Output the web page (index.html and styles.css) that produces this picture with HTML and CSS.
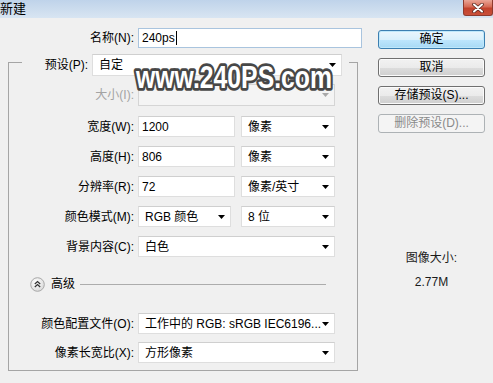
FILE: index.html
```html
<!DOCTYPE html>
<html lang="zh-CN">
<head>
    <meta charset="UTF-8">
    <title>新建</title>
    <link rel="stylesheet" href="styles.css">
</head>
<body>
<div class="titlebar">
    <span class="title">新建</span>
    <div class="close">
        <svg width="14" height="10" viewBox="0 0 14 10"><path d="M3 1.5 L11 8.5 M11 1.5 L3 8.5" stroke="#5a2a22" stroke-width="3.6" stroke-linecap="round"/><path d="M3 1.5 L11 8.5 M11 1.5 L3 8.5" stroke="#fff" stroke-width="2" stroke-linecap="round"/></svg>
    </div>
</div>
<div class="dialog">
    <div class="main">
        <div class="row name-row">
            <label class="lbl">名称(N):</label>
            <div class="field input name-input">240ps<span class="caret"></span></div>
        </div>
        <div class="group">
            <div class="preset">
                <label class="preset-lbl">预设(P):</label>
                <div class="field select preset-select">自定<svg class="arrow" width="7" height="4"><path d="M0 0h7L3.5 4z"/></svg></div>
            </div>
            <div class="row size-row">
                <label class="lbl disabled">大小(I):</label>
                <div class="field select wide off"><svg class="arrow" width="7" height="4"><path d="M0 0h7L3.5 4z"/></svg></div>
            </div>
            <div class="row first">
                <label class="lbl">宽度(W):</label>
                <div class="field input num">1200</div>
                <div class="field select unit">像素<svg class="arrow" width="7" height="4"><path d="M0 0h7L3.5 4z"/></svg></div>
            </div>
            <div class="row">
                <label class="lbl">高度(H):</label>
                <div class="field input num">806</div>
                <div class="field select unit">像素<svg class="arrow" width="7" height="4"><path d="M0 0h7L3.5 4z"/></svg></div>
            </div>
            <div class="row">
                <label class="lbl">分辨率(R):</label>
                <div class="field input num">72</div>
                <div class="field select unit">像素/英寸<svg class="arrow" width="7" height="4"><path d="M0 0h7L3.5 4z"/></svg></div>
            </div>
            <div class="row">
                <label class="lbl">颜色模式(M):</label>
                <div class="field select mode">RGB 颜色<svg class="arrow" width="7" height="4"><path d="M0 0h7L3.5 4z"/></svg></div>
                <div class="field select unit bits">8 位<svg class="arrow" width="7" height="4"><path d="M0 0h7L3.5 4z"/></svg></div>
            </div>
            <div class="row">
                <label class="lbl">背景内容(C):</label>
                <div class="field select wide">白色<svg class="arrow" width="7" height="4"><path d="M0 0h7L3.5 4z"/></svg></div>
            </div>
            <div class="advanced">
                <svg class="adv-icon" width="15" height="15" viewBox="0 0 15 15">
                    <defs>
                        <radialGradient id="knob" cx="0.4" cy="0.35" r="0.7">
                            <stop offset="0" stop-color="#ffffff"/>
                            <stop offset="1" stop-color="#d8d8d8"/>
                        </radialGradient>
                    </defs>
                    <circle cx="7.5" cy="7.5" r="6.8" fill="url(#knob)" stroke="#a8a8a8"/>
                    <path d="M4.8 7 L7.5 4.6 L10.2 7 M4.8 10 L7.5 7.6 L10.2 10" fill="none" stroke="#333" stroke-width="1.3"/>
                </svg>
                <span class="adv-text">高级</span>
                <span class="adv-line"></span>
            </div>
            <div class="row profile-row">
                <label class="lbl">颜色配置文件(O):</label>
                <div class="field select wide"><span class="clip">工作中的 RGB: sRGB IEC6196...</span><svg class="arrow" width="7" height="4"><path d="M0 0h7L3.5 4z"/></svg></div>
            </div>
            <div class="row aspect-row">
                <label class="lbl">像素长宽比(X):</label>
                <div class="field select wide">方形像素<svg class="arrow" width="7" height="4"><path d="M0 0h7L3.5 4z"/></svg></div>
            </div>
        </div>
    </div>
    <div class="side">
        <div class="btn default">确定</div>
        <div class="btn">取消</div>
        <div class="btn">存储预设(S)...</div>
        <div class="btn off">删除预设(D)...</div>
        <div class="info">
            <div>图像大小:</div>
            <div class="info-value">2.77M</div>
        </div>
    </div>
    <svg class="watermark" width="214" height="44"><text x="3" y="31" textLength="196" lengthAdjust="spacingAndGlyphs">www.240PS.com</text></svg>
</div>
</body>
</html>
```
FILE: styles.css
```css
* {
    box-sizing: border-box;
}

body {
    margin: 0;
    width: 493px;
    height: 383px;
    overflow: hidden;
    background: #f0f0f0;
    color: #000;
    font: 12px/16px "Liberation Sans", "Noto Sans CJK SC", sans-serif;
}

.titlebar {
    height: 18px;
    background: linear-gradient(#bfd3ea, #d8e5f2);
    display: flex;
    justify-content: space-between;
}

.title {
    font-size: 13px;
    line-height: 17px;
}

.close {
    width: 30px;
    height: 16px;
    border: 1px solid #8e3b2f;
    border-top: 0;
    border-radius: 0 0 3px 3px;
    background: linear-gradient(#eaa596, #d66a55 45%, #c2422c 55%, #c9503a);
    display: flex;
    align-items: center;
    justify-content: center;
}

.dialog {
    position: relative;
    display: flex;
}

.main {
    width: 370px;
    padding-left: 8px;
}

.row {
    display: flex;
    align-items: center;
}

.lbl {
    flex: none;
    width: 125px;
    margin-right: 4px;
    text-align: right;
    white-space: nowrap;
}

.disabled {
    color: #a3a3a3;
}

.name-row {
    margin-top: 10px;
    padding-left: 1px;
}

.field {
    flex: none;
    height: 21px;
    background: #fff;
    border: 1px solid #dedede;
    border-top-color: #cfcfcf;
    display: flex;
    align-items: center;
    padding-left: 6px;
    white-space: nowrap;
}

.input {
    padding-left: 3px;
}

.name-input {
    width: 224px;
    height: 20px;
    border: 1px solid #a9c4de;
}

.caret {
    width: 1px;
    height: 14px;
    margin-left: 1px;
    background: #000;
}

.arrow {
    margin-left: auto;
    margin-right: 5px;
    flex: none;
}

.off .arrow path {
    fill: #a8a8a8;
}

.group {
    width: 350px;
    margin-top: 14px;
    border: 1px solid #a5a5a5;
    padding-bottom: 7px;
}

.preset {
    display: flex;
    align-items: center;
    width: 327px;
    margin: -9px 0 0 13px;
    padding-right: 7px;
    background: #f0f0f0;
}

.preset-lbl {
    width: 66px;
    margin-right: 4px;
    text-align: right;
}

.preset-select {
    width: 250px;
    height: 22px;
}

.size-row {
    margin-top: 8px;
}

.size-row .field {
    height: 22px;
}

.row + .row {
    margin-top: 9px;
}

.row.first {
    margin-top: 10px;
}

.wide {
    width: 197px;
}

.off {
    background: #f4f4f4;
    border-color: #d5d5d5;
}

.num {
    width: 97px;
}

.unit {
    width: 94px;
    margin-left: 6px;
}

.mode {
    width: 93px;
}

.bits {
    margin-left: 10px;
}

.advanced {
    display: flex;
    align-items: center;
    height: 16px;
    margin-top: 19px;
    padding-left: 21px;
    padding-right: 31px;
}

.adv-icon {
    flex: none;
}

.adv-text {
    margin-left: 6px;
}

.adv-line {
    flex: 1;
    height: 1px;
    margin-left: 5px;
    background: #acacac;
}

.row.profile-row {
    margin-top: 21px;
}

.row.aspect-row {
    margin-top: 8px;
}

.clip {
    overflow: hidden;
    width: 176px;
}

.side {
    width: 107px;
    margin-left: 8px;
    padding-top: 12px;
}

.btn {
    height: 19px;
    margin-bottom: 9px;
    border: 1px solid #707070;
    border-radius: 3px;
    background: linear-gradient(#f2f2f2, #ebebeb 50%, #dddddd 51%, #cfcfcf);
    box-shadow: inset 0 0 0 1px #fbfbfb;
    text-align: center;
    line-height: 17px;
}

.btn.default {
    border-color: #3c7fb1;
    background: linear-gradient(#eaf6fd, #d9f0fc 50%, #bee6fd 51%, #a7d9f5);
    box-shadow: inset 0 0 0 1px #bfe8fb;
}

.btn.off {
    border-color: #adb2b5;
    background: #f4f4f4;
    box-shadow: none;
    color: #8a8a8a;
}

.info {
    margin-top: 117px;
    text-align: center;
    color: #1a1a1a;
}

.info-value {
    margin-top: 8px;
}

.watermark {
    position: absolute;
    left: 133px;
    top: 39px;
}

.watermark text {
    font: bold 31px "Liberation Sans", sans-serif;
    fill: #fff;
    stroke: #474747;
    stroke-width: 5.5px;
    stroke-linejoin: round;
    paint-order: stroke;
}
```
